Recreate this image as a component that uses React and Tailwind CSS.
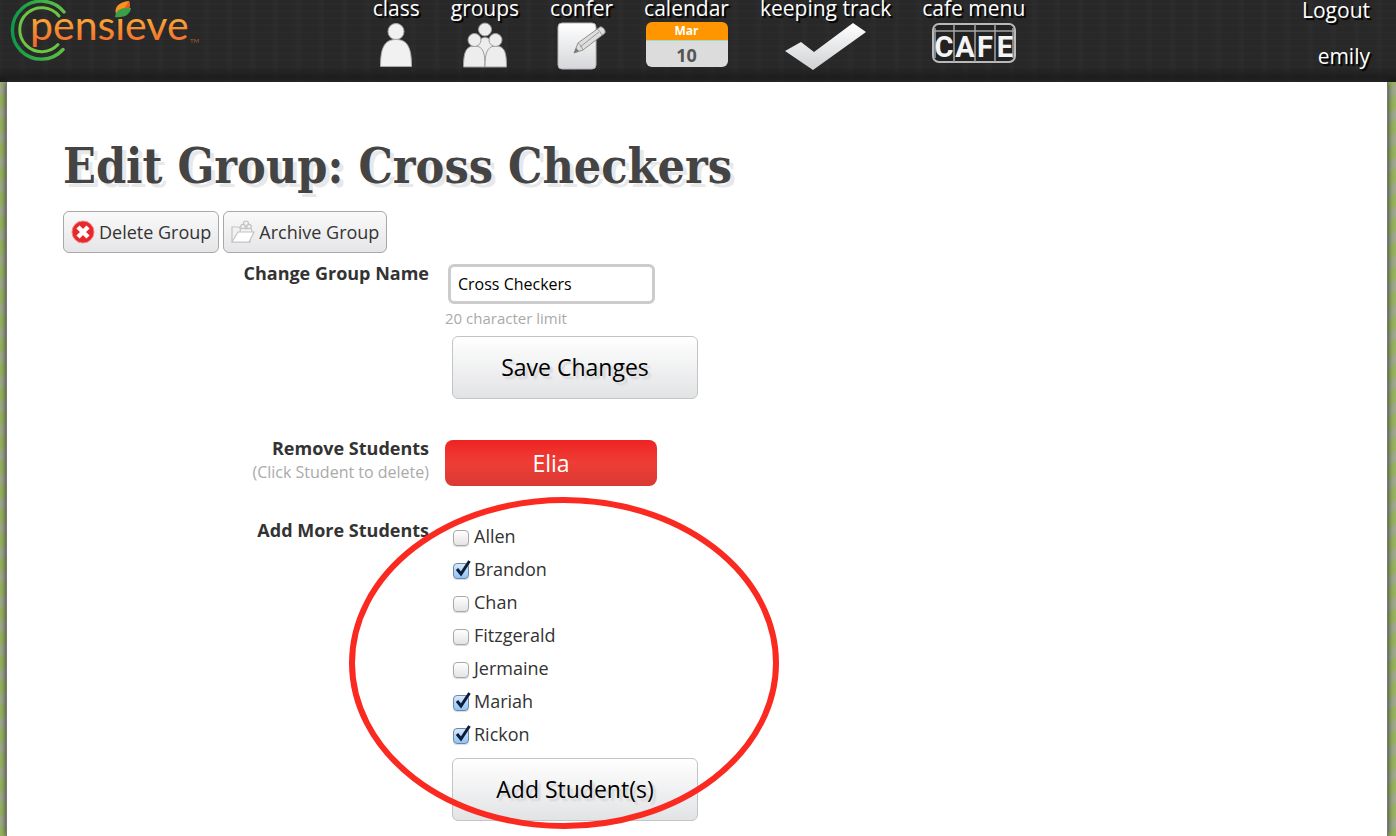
import React, { useState } from 'react';

const studentList = [
  { name: 'Allen', checked: false },
  { name: 'Brandon', checked: true },
  { name: 'Chan', checked: false },
  { name: 'Fitzgerald', checked: false },
  { name: 'Jermaine', checked: false },
  { name: 'Mariah', checked: true },
  { name: 'Rickon', checked: true },
];

const Logo = () => (
  <svg width="204" height="64" viewBox="0 0 204 64" role="img" aria-label="pensieve" className="[text-shadow:none]">
    <defs>
      <linearGradient id="ring" x1="0" x2="1" y1="0" y2="0">
        <stop offset="0" stopColor="#0d9a48" />
        <stop offset="1" stopColor="#5fc044" />
      </linearGradient>
      <linearGradient id="word" x1="0" x2="0" y1="0" y2="1">
        <stop offset="0.3" stopColor="#fbb03b" />
        <stop offset="0.9" stopColor="#f26a2a" />
      </linearGradient>
    </defs>
    <path d="M64 12A29 29 0 1 0 63 49.500" fill="none" stroke="url(#ring)" strokeWidth="3.400" strokeLinecap="round" />
    <path d="M59 16A22 22 0 1 0 58 44.500" fill="none" stroke="#6cc644" strokeWidth="3" strokeLinecap="round" />
    <text x="30" y="40" fill="url(#word)" fontSize="41" fontFamily="Lato, sans-serif">pensıeve</text>
    <text x="190" y="43" fill="#a55f2a" fontSize="6" fontFamily="Lato, sans-serif">TM</text>
    <path d="M116 14c-2-7 3-12 13-13 2 6 0 11-10 12z" fill="#f7931e" />
    <path d="M122 12c2-4 5-7 7-11 2 6 0 9-4 11z" fill="#f15a24" />
    <path d="M115 17c1-7 7-10 16-9-1 7-7 10-16 9z" fill="#39a047" />
  </svg>
);

const ClassIcon = () => (
  <svg width="34" height="46" viewBox="0 0 34 46" aria-hidden="true" fill="#f1f1f1" stroke="#a9a9a9">
    <path d="M1.500 44.500c0-17 3-27 15.500-27s15.500 10 15.500 27z" />
    <circle cx="17" cy="9.500" r="8" />
  </svg>
);

const GroupsIcon = () => (
  <svg width="46" height="46" viewBox="0 0 46 46" aria-hidden="true" fill="#ededed" stroke="#9c9c9c">
    <path d="M12 44.500c0-18 3-29 11-29s11 11 11 29z" />
    <circle cx="23" cy="7.500" r="6.500" />
    <path d="M1.500 45c0-14 2-21 11-21s10.500 7 10.500 21z" />
    <path d="M23 45c0-14 2-21 11-21s10.500 7 10.500 21z" />
    <circle cx="12.500" cy="18" r="6.500" />
    <circle cx="33.500" cy="18" r="6.500" />
  </svg>
);

const ConferIcon = () => (
  <svg width="50" height="48" viewBox="0 0 50 48" aria-hidden="true">
    <defs>
      <linearGradient id="paper" x1="0" x2="0" y1="0" y2="1">
        <stop offset="0" stopColor="#fff" />
        <stop offset="1" stopColor="#d5d7da" />
      </linearGradient>
    </defs>
    <rect x="1" y="1" width="38" height="46" rx="4" fill="url(#paper)" stroke="#b5b5b5" />
    <path d="M17 31l4-10L43 5c2-1 6 3 5 6L26 28z" fill="#dedede" stroke="#8f8f8f" />
    <path d="M21 21c2 1 4 4 5 7M40 7c2 1 4 4 5 6M23 25L42 10" fill="none" stroke="#9b9b9b" />
    <path d="M17 31l2-5 3 3z" fill="#777" />
  </svg>
);

const CheckIcon = () => (
  <svg width="84" height="50" viewBox="0 0 84 50" aria-hidden="true">
    <defs>
      <linearGradient id="tick" x1="0" x2="0" y1="0" y2="1">
        <stop offset="0" stopColor="#fff" />
        <stop offset="1" stopColor="#cfd1d4" />
      </linearGradient>
    </defs>
    <path d="M1 29l16-9 13 10L69 1l13 9-53 38z" fill="url(#tick)" />
  </svg>
);

const CafeIcon = () => (
  <svg width="86" height="42" viewBox="0 0 86 42" aria-hidden="true" className="[text-shadow:none]">
    <rect x="2" y="2" width="82" height="38" rx="6" fill="#222" stroke="#b9b9b9" strokeWidth="2" />
    <path d="M2 9h82M23 2v38M44 2v38M64 2v38M4 6v30M82 6v30" stroke="#a5a5a5" strokeWidth="1.500" />
    <g fill="#f4f4f4" fontSize="29" fontWeight="700" fontFamily="Roboto, sans-serif" textAnchor="middle">
      <text x="13" y="35">C</text>
      <text x="34" y="35">A</text>
      <text x="54" y="35">F</text>
      <text x="74" y="35">E</text>
    </g>
  </svg>
);

const CalendarIcon = () => (
  <div className="w-[82px] h-[45px] rounded-md overflow-hidden text-center font-bold [text-shadow:none]">
    <div className="bg-[#ff9500] text-white text-xs leading-[18px] border-b border-[#a5dcc0]">Mar</div>
    <div className="bg-[#dcdcdc] text-[#555] text-lg leading-7">10</div>
  </div>
);

const navItems = [
  { label: 'class', icon: <ClassIcon /> },
  { label: 'groups', icon: <GroupsIcon /> },
  { label: 'confer', icon: <ConferIcon /> },
  { label: 'calendar', icon: <CalendarIcon /> },
  { label: 'keeping track', icon: <CheckIcon /> },
  { label: 'cafe menu', icon: <CafeIcon /> },
];

const DeleteIcon = () => (
  <svg width="24" height="24" viewBox="0 0 24 24" aria-hidden="true">
    <circle cx="12" cy="12" r="11" fill="#e8282b" stroke="#f08a8a" />
    <path d="M7 7l10 10M17 7l-10 10" stroke="#fff" strokeWidth="4.500" />
  </svg>
);

const ArchiveIcon = () => (
  <svg width="24" height="24" viewBox="0 0 24 24" aria-hidden="true" fill="#f2f2f2" stroke="#c3c3c3" strokeWidth="1.200">
    <path d="M1 22V7h7l2 3h9v12z" />
    <path d="M9 13c0-4 1-6 3-6 2 0 2 2 3 2s2-2 3-2c2 0 3 2 3 6z" />
    <circle cx="15" cy="3.500" r="2.500" />
    <circle cx="12" cy="6.500" r="2.200" />
    <circle cx="18" cy="6.500" r="2.200" />
    <path d="M1 22l6-10h16l-5 10z" fill="#fff" />
  </svg>
);

const StudentCheckbox = ({ name, checked, onChange }) => (
  <label className="flex items-center gap-1 h-[33px] w-fit text-lg text-[#333]">
    <span className="relative w-[17px] h-4 mt-1">
      <input
        type="checkbox"
        checked={checked}
        onChange={onChange}
        className="block appearance-none w-4 h-4 rounded border border-[#a8a8a8] bg-linear-to-b from-white to-[#e4e4e4] shadow-[0_1px_1px_rgba(0,0,0,0.15)] checked:border-[#6f86a8] checked:from-[#d6e8fa] checked:to-[#8fc4f5]"
      />
      {checked && (
        <svg width="18" height="18" viewBox="0 0 18 18" aria-hidden="true" className="absolute -top-1 left-0 pointer-events-none">
          <path d="M4 10l4 5L16.500 2" fill="none" stroke="#0b1c3c" strokeWidth="3" />
        </svg>
      )}
    </span>
    {name}
  </label>
);

const bigButton =
  'w-[246px] h-[63px] ml-[7px] rounded-md border border-[#c4c4c4] bg-linear-to-b from-white to-[#e2e3e5] text-[23px] text-black [text-shadow:3px_3px_2px_#d4d4d4]';
const smallButton =
  'flex items-center gap-1 h-[42px] px-[7px] rounded-md border border-[#a8a8a8] bg-linear-to-b from-[#fafafa] to-[#e6e6e8] text-lg text-[#333]';

const App = () => {
  const [groupName, setGroupName] = useState('Cross Checkers');
  const [students, setStudents] = useState(studentList);

  const toggle = (name) => {
    setStudents(students.map((s) => (s.name === name ? { ...s, checked: !s.checked } : s)));
  };

  return (
    <div className="min-h-screen flex flex-col overflow-hidden font-['Open_Sans','Noto_Sans',sans-serif] bg-[repeating-linear-gradient(145deg,#98b45f_0px,#98b45f_8px,#a0aa8c_11px,#a0aa8c_17px,#98b45f_20px)]">
      <header className="grid grid-cols-[1fr_auto_1fr] h-[82px] bg-[#282828] bg-[linear-gradient(to_bottom,transparent_80%,#1a1a1a),repeating-linear-gradient(90deg,#ffffff05_0px,transparent_3px,transparent_17px,#ffffff04_23px),repeating-linear-gradient(0deg,#ffffff05_0px,transparent_2px,transparent_7px)] text-white text-[21px] [text-shadow:2px_2px_1px_#000]">
        <a href="#home" className="justify-self-start">
          <Logo />
        </a>
        <nav className="flex gap-[31px] pl-[2px]">
          {navItems.map((item) => (
            <a key={item.label} href="#nav" className="flex flex-col items-center gap-[6px] leading-4">
              {item.label}
              {item.icon}
            </a>
          ))}
        </nav>
        <div className="flex flex-col items-end gap-[26px] pr-[26px] leading-5">
          <a href="#logout">Logout</a>
          <a href="#account">emily</a>
        </div>
      </header>

      <main className="grow ml-[6px] mr-2 px-14 pt-[54px] bg-white border-x border-[#777] shadow-[0_0_6px_#333]">
        <h1 className="text-[48px] leading-[60px] font-bold text-[#444] font-['DejaVu_Serif_Condensed','DejaVu_Serif',serif] [text-shadow:4px_4px_0_#e8e8e8]">
          Edit Group: Cross Checkers
        </h1>
        <div className="flex gap-1 mt-[15px]">
          <button type="button" className={smallButton}>
            <DeleteIcon /> Delete Group
          </button>
          <button type="button" className={smallButton}>
            <ArchiveIcon /> Archive Group
          </button>
        </div>

        <form onSubmit={(e) => e.preventDefault()} className="grid grid-cols-[366px_1fr] gap-x-4 pt-2">
          <label htmlFor="groupName" className="text-right text-lg font-bold leading-6 text-[#333]">
            Change Group Name
          </label>
          <div className="pt-[3px]">
            <input
              id="groupName"
              type="text"
              maxLength={20}
              value={groupName}
              onChange={(e) => setGroupName(e.target.value)}
              className="block w-[207px] h-10 ml-[3px] px-[7px] rounded-md border-3 border-[#ccc] bg-white text-base text-black"
            />
            <p className="text-[15px] leading-6 mt-[2px] mb-[6px] text-[#aaa]">20 character limit</p>
            <button type="submit" className={bigButton}>Save Changes</button>
          </div>

          <div className="text-right mt-[37px]">
            <p className="text-lg font-bold leading-6 text-[#333]">Remove Students</p>
            <p className="text-base leading-6 text-[#aaa]">(Click Student to delete)</p>
          </div>
          <div className="mt-[41px]">
            <button type="button" className="w-[212px] h-[46px] rounded-lg bg-linear-to-b from-[#ee2222] via-[#ee3d35] to-[#d93a33] text-[23px] leading-6 font-medium text-white">
              Elia
            </button>
          </div>

          <p className="text-right text-lg font-bold leading-6 mt-8 text-[#333]">Add More Students</p>
          <div className="relative mt-[33px]">
            <div role="group" aria-label="Add More Students" className="pl-2 mb-2">
              {students.map((s) => (
                <StudentCheckbox key={s.name} name={s.name} checked={s.checked} onChange={() => toggle(s.name)} />
              ))}
            </div>
            <button type="button" className={bigButton}>Add Student(s)</button>
            <svg
              width="432"
              height="332"
              viewBox="0 0 432 332"
              aria-hidden="true"
              className="absolute -left-24 -top-[22px] pointer-events-none"
            >
              <ellipse cx="215" cy="166" rx="212" ry="163" fill="none" stroke="#fb2a20" strokeWidth="6" />
            </svg>
          </div>
        </form>
      </main>
    </div>
  );
};

export default App;
